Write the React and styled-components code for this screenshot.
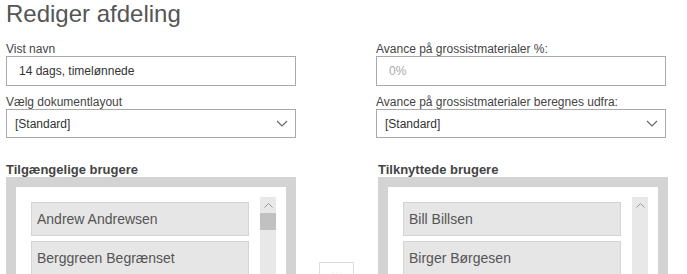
import React from 'react'
import styled, { createGlobalStyle } from 'styled-components'
import { ChevronsRight } from 'lucide-react'

const GlobalStyle = createGlobalStyle`
  html, body {
    margin: 0;
    padding: 0;
    background: #fff;
    overflow: hidden;
  }
  body {
    font-family: "Liberation Sans", Arial, sans-serif;
    color: #444;
  }
`

const Page = styled.div`
  padding: 0 6px;
  width: 687px;
  box-sizing: border-box;
`

const Title = styled.h1`
  margin: 0;
  font-size: 24px;
  line-height: 28px;
  font-weight: 400;
  color: #555;
`

const Form = styled.div`
  display: grid;
  grid-template-columns: 290px 290px;
  column-gap: 80px;
  margin-top: 14px;
`

const Column = styled.div`
  display: flex;
  flex-direction: column;
`

const Label = styled.label`
  display: block;
  font-size: 12px;
  line-height: 14px;
  color: #444;
  margin-top: ${p => (p.$first ? '0' : '9px')};
`

const TextInput = styled.input`
  box-sizing: border-box;
  width: 290px;
  height: 30px;
  margin: 0;
  padding: 0 12px;
  border: 1px solid #a9a9a9;
  border-radius: 0;
  font-family: inherit;
  font-size: 12px;
  color: #333;
  outline: none;
  &::placeholder {
    color: #aaa;
  }
`

const SelectBox = styled.div`
  box-sizing: border-box;
  width: 290px;
  height: 29px;
  display: flex;
  align-items: center;
  justify-content: space-between;
  padding: 0 7px 0 8px;
  border: 1px solid #a9a9a9;
  font-size: 12px;
  color: #333;
  background: #fff;
`

const Lists = styled.div`
  display: flex;
  align-items: flex-start;
  margin-top: 24px;
`

const ListBlock = styled.div`
  width: 290px;
  display: flex;
  flex-direction: column;
`

const ListTitle = styled.div`
  font-size: 13px;
  line-height: 15px;
  font-weight: 700;
  color: #444;
`

const ListFrame = styled.div`
  border: 10px solid #d3d3d3;
  background: #fff;
  padding: 10px;
  height: 240px;
  display: flex;
`

const Items = styled.div`
  flex: 1;
  padding: 5px 11px 0 5px;
  display: flex;
  flex-direction: column;
  gap: 5px;
`

const Item = styled.div`
  box-sizing: border-box;
  height: 34px;
  padding: 0 5px;
  line-height: 32px;
  font-size: 14px;
  color: #555;
  background: #e6e6e6;
  border: 1px solid #d4d4d4;
`

const Track = styled.div`
  width: 16px;
  background: #e8e8e8;
  display: flex;
  flex-direction: column;
`

const ArrowUp = styled.div`
  height: 16px;
  display: flex;
  align-items: center;
  justify-content: center;
`

const Thumb = styled.div`
  height: 17px;
  background: #c1c1c1;
`

const Middle = styled.div`
  width: 35px;
  margin: 0 24px 0 23px;
  padding-top: 100px;
`

const MoveButton = styled.button`
  box-sizing: border-box;
  width: 35px;
  height: 30px;
  padding: 0;
  display: flex;
  align-items: center;
  justify-content: center;
  background: #fff;
  border: 1px solid #ddd;
  color: #444;
`

const Chevron = () => (
  <svg width="12" height="7" viewBox="0 0 12 7">
    <path d="M1 1l5 5 5-5" fill="none" stroke="#666" strokeWidth="1.1" />
  </svg>
)

const SmallUp = () => (
  <svg width="9" height="5" viewBox="0 0 9 5">
    <path d="M0.5 4.5l4-4 4 4" fill="none" stroke="#999" strokeWidth="1" />
  </svg>
)

const UserList = ({ title, users, thumb }) => (
  <ListBlock>
    <ListTitle>{title}</ListTitle>
    <ListFrame>
      <Items>
        {users.map(u => (
          <Item key={u}>{u}</Item>
        ))}
      </Items>
      <Track>
        <ArrowUp>
          <SmallUp />
        </ArrowUp>
        {thumb && <Thumb />}
      </Track>
    </ListFrame>
  </ListBlock>
)

const App = () => {
  return (
    <Page>
      <GlobalStyle />
      <Title>Rediger afdeling</Title>
      <Form>
        <Column>
          <Label $first>Vist navn</Label>
          <TextInput defaultValue="14 dags, timelønnede" />
          <Label>Vælg dokumentlayout</Label>
          <SelectBox>
            <span>[Standard]</span>
            <Chevron />
          </SelectBox>
        </Column>
        <Column>
          <Label $first>Avance på grossistmaterialer %:</Label>
          <TextInput placeholder="0%" />
          <Label>Avance på grossistmaterialer beregnes udfra:</Label>
          <SelectBox>
            <span>[Standard]</span>
            <Chevron />
          </SelectBox>
        </Column>
      </Form>
      <Lists>
        <UserList
          title="Tilgængelige brugere"
          users={['Andrew Andrewsen', 'Berggreen Begrænset', 'Carl Carlsen']}
          thumb
        />
        <Middle>
          <MoveButton>
            <ChevronsRight size={14} strokeWidth={1.5} />
          </MoveButton>
        </Middle>
        <UserList title="Tilknyttede brugere" users={['Bill Billsen', 'Birger Børgesen', 'Dorte Dam']} />
      </Lists>
    </Page>
  )
}

export default App
